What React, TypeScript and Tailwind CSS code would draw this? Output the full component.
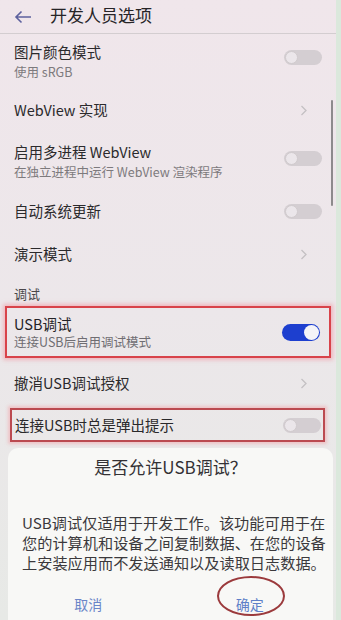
import React from "react";

const font = { fontFamily: '"Noto Sans CJK SC", "Noto Sans", sans-serif' };

function Toggle({ on = false }: { on?: boolean }) {
  if (on) {
    return (
      <div className="w-[38px] h-[17px] rounded-full bg-[#1d3fcf] flex items-center justify-end pr-[1px]">
        <div className="w-[15px] h-[15px] rounded-full bg-[#f4f4f8]" />
      </div>
    );
  }
  return (
    <div className="w-[38px] h-[15px] rounded-full bg-[#d4ced2] flex items-center pl-[1px]">
      <div className="w-[13px] h-[13px] rounded-full bg-[#ebe6ea] border border-[#d0cacd]" />
    </div>
  );
}

function Chevron() {
  return (
    <svg width="8" height="11" viewBox="0 0 8 11" className="mr-[14px]">
      <path d="M1.5 1 L6 5.5 L1.5 10" fill="none" stroke="#c4c0c3" strokeWidth="1.3" />
    </svg>
  );
}

function Row({
  title,
  sub,
  right,
  h,
}: {
  title: string;
  sub?: string;
  right?: React.ReactNode;
  h: string;
}) {
  return (
    <div className={`shrink-0 flex items-center justify-between pl-[14px] pr-[14px] ${h}`}>
      <div className="flex flex-col">
        <div className="text-[14.5px] leading-[20px] text-[#2b2a2c]">{title}</div>
        {sub && <div className="text-[12.5px] leading-[18px] text-[#7d7a7d] mt-[1px]">{sub}</div>}
      </div>
      {right}
    </div>
  );
}

export default function App() {
  return (
    <div className="w-[341px] h-[620px] overflow-hidden bg-[#dbe8dc] pr-[5px]" style={font}>
      <div className="relative h-[620px] bg-gradient-to-b from-[#f0e6eb] via-[#ece7ea] to-[#e7e9e6] flex flex-col">
        {/* scrollbar */}
        <div className="absolute left-[331px] top-[100px] w-[2px] h-[106px] bg-[#8d8a8c] rounded" />
        {/* header */}
        <div className="shrink-0 h-[34px] flex items-center border-b border-[#d3cdd0] pl-[14px]">
          <svg width="18" height="14" viewBox="0 0 18 14">
            <path d="M17 7 H2 M7.5 1.5 L2 7 L7.5 12.5" fill="none" stroke="#5d619e" strokeWidth="1.6" />
          </svg>
          <div className="ml-[18px] text-[17px] leading-[20px] text-[#262427] mb-[4px]">开发人员选项</div>
        </div>

        <Row h="h-[54px]" title="图片颜色模式" sub="使用 sRGB" right={<div className="mt-[-8px]"><Toggle /></div>} />
        <Row h="h-[44px]" title="WebView 实现" right={<Chevron />} />
        <Row h="h-[58px]" title="启用多进程 WebView" sub="在独立进程中运行 WebView 渲染程序" right={<div className="mt-[-6px]"><Toggle /></div>} />
        <Row h="h-[42px]" title="自动系统更新" right={<Toggle />} />
        <Row h="h-[44px]" title="演示模式" right={<Chevron />} />
        <div className="shrink-0 h-[30px] pl-[14px] flex items-end pb-[3px] text-[13px] leading-[18px] text-[#4a474a]">调试</div>

        <div className="shrink-0 mx-[5px] h-[52px] border-2 border-[#d8434a] shadow-[0_0_4px_2px_rgba(240,150,160,0.6)] flex items-center justify-between pl-[7px] pr-[9px]">
          <div className="flex flex-col">
            <div className="text-[14.5px] leading-[19px] text-[#242326]">USB调试</div>
            <div className="text-[12.5px] leading-[17px] text-[#6f6d72]">连接USB后启用调试模式</div>
          </div>
          <Toggle on />
        </div>

        <Row h="h-[50px]" title="撤消USB调试授权" right={<Chevron />} />

        <div className="shrink-0 ml-[10px] mr-[11px] h-[34px] border-2 border-[#bb4a50] shadow-[0_0_3px_2px_rgba(240,170,175,0.6)] flex items-center justify-between pl-[3px] pr-[2px]">
          <div className="text-[14.5px] leading-[20px] text-[#29282a]">连接USB时总是弹出提示</div>
          <Toggle />
        </div>

        <div className="mt-[6px] ml-[8px] mr-[3px] flex-1 bg-[#f8f8f6] rounded-t-[10px] flex flex-col items-center">
          <div className="mt-[9px] text-[17px] leading-[20px] text-[#333134]">是否允许USB调试？</div>
          <div className="mt-[35px] self-start pl-[14px] text-[15.2px] leading-[20px] text-[#3b393c] whitespace-nowrap">
            <div>USB调试仅适用于开发工作。该功能可用于在</div>
            <div>您的计算机和设备之间复制数据、在您的设备</div>
            <div>上安装应用而不发送通知以及读取日志数据。</div>
          </div>
          <div className="mt-[23px] w-full flex">
            <div className="flex-1 flex justify-center">
              <span className="text-[14px] leading-[18px] text-[#6b86c8] mr-[2px]">取消</span>
            </div>
            <div className="flex-1 flex justify-center">
              <span className="relative text-[14px] leading-[18px] text-[#5e7fc8] mr-[4px]">
                确定
                <span className="absolute left-[-19px] top-[-19px] w-[68px] h-[40px] rounded-[50%] border-2 border-[#9b3a3c]" />
              </span>
            </div>
          </div>
        </div>
      </div>
    </div>
  );
}
